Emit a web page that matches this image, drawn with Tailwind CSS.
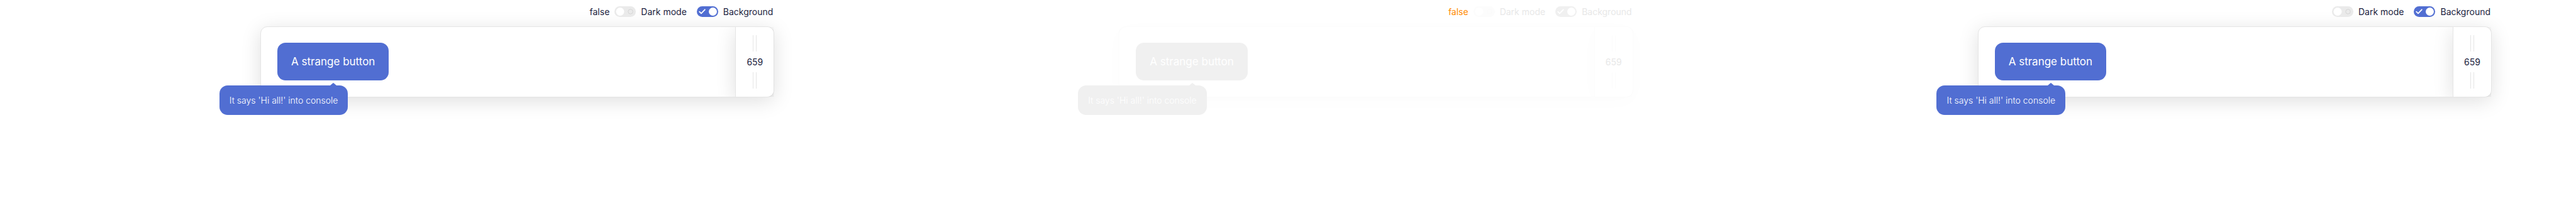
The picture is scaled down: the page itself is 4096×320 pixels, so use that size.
<!DOCTYPE html>
<html lang="en">
<head>
<meta charset="utf-8">
<title>Resizable preview</title>
<script src="https://cdn.jsdelivr.net/npm/@tailwindcss/browser@4"></script>
</head>
<body class="min-h-screen overflow-x-hidden bg-white font-['Inter',sans-serif] text-[14px] leading-[17px] text-[#1b1d3d]">
<main class="grid grid-cols-3">

  <section class="pt-[10px] pr-[134px] pl-[414px]">
    <div class="relative z-10 mb-[15px] flex items-center justify-end gap-4 pr-[2px]">
      <div class="flex items-center gap-2">
        <output>false</output>
        <label class="flex items-center gap-2">
          <span class="relative flex">
            <input type="checkbox" class="h-[17px] w-[34px] appearance-none rounded-full bg-[#eaeaea] checked:bg-[#516ed2]">
            <svg class="absolute inset-0" width="34" height="17" viewBox="0 0 34 17" fill="none"><circle cx="9" cy="8.5" r="6.5" fill="#fff"/><circle cx="25.5" cy="8.5" r="3.7" stroke="#d2d2d2" stroke-width="0.9"/></svg>
          </span>
          Dark mode
        </label>
      </div>
      <label class="flex items-center gap-2">
        <span class="relative flex">
          <input type="checkbox" checked class="h-[17px] w-[34px] appearance-none rounded-full bg-[#eaeaea] checked:bg-[#516ed2]">
          <svg class="absolute inset-0" width="34" height="17" viewBox="0 0 34 17" fill="none"><circle cx="25.5" cy="8.5" r="6.5" fill="#fff"/><path d="M4.2 8.6 L7 11.4 L12.8 5.3" stroke="#fff" stroke-width="1.8" stroke-linecap="round" stroke-linejoin="round"/></svg>
        </span>
        Background
      </label>
    </div>
    <div class="flex rounded-[11px] border border-[#e5e5e5] bg-white shadow-[0_6px_32px_rgba(0,0,0,0.13)]">
      <div class="flex-1 px-[26px] pt-[25px] pb-[26px]">
        <div class="relative z-10 w-fit">
          <button type="button" class="h-[60px] rounded-[13px] bg-[#516ed2] px-[22px] text-[17px] text-white">A strange button</button>
          <div role="tooltip" class="absolute top-[68px] right-[65px] rounded-[13px] bg-[#516ed2] px-4 py-[15px] font-light whitespace-nowrap text-white">It says 'Hi all!' into console
            <svg class="absolute right-[18px] bottom-full" width="10" height="4" viewBox="0 0 10 4"><path d="M0 4 L4.2 0.4 Q5 -0.2 5.8 0.4 L10 4 Z" fill="#516ed2"/></svg>
          </div>
        </div>
      </div>
      <div class="flex w-[61px] flex-col items-center justify-between rounded-r-[10px] border-l border-[#e5e5e5] bg-white py-[13px] shadow-[0_6px_32px_rgba(0,0,0,0.13)] [clip-path:inset(0_0_0_-60px)]">
        <span class="h-[26px] w-[6px] border-x border-[#e5e5e5]"></span>
        <span>659</span>
        <span class="h-[26px] w-[6px] border-x border-[#e5e5e5]"></span>
      </div>
    </div>
  </section>

  <section class="pt-[10px] pr-[134px] pl-[414px] text-[#e8e8e8]">
    <div class="relative z-10 mb-[15px] flex items-center justify-end gap-4 pr-[2px]">
      <div class="flex items-center gap-2">
        <output class="text-[#ff8a00]">false</output>
        <label class="flex items-center gap-2">
          <span class="relative flex">
            <input type="checkbox" class="h-[17px] w-[34px] appearance-none rounded-full bg-[#fcfcfc] checked:bg-[#f0f0f0]">
            <svg class="absolute inset-0" width="34" height="17" viewBox="0 0 34 17" fill="none"><circle cx="9" cy="8.5" r="6.5" fill="#fff"/><circle cx="25.5" cy="8.5" r="3.7" stroke="#f9f9f9" stroke-width="0.9"/></svg>
          </span>
          Dark mode
        </label>
      </div>
      <label class="flex items-center gap-2">
        <span class="relative flex">
          <input type="checkbox" checked class="h-[17px] w-[34px] appearance-none rounded-full bg-[#fcfcfc] checked:bg-[#f0f0f0]">
          <svg class="absolute inset-0" width="34" height="17" viewBox="0 0 34 17" fill="none"><circle cx="25.5" cy="8.5" r="6.5" fill="#fff"/><path d="M4.2 8.6 L7 11.4 L12.8 5.3" stroke="#fff" stroke-width="1.8" stroke-linecap="round" stroke-linejoin="round"/></svg>
        </span>
        Background
      </label>
    </div>
    <div class="flex rounded-[11px] border border-[#fcfcfc] bg-white shadow-[0_6px_32px_rgba(0,0,0,0.015)]">
      <div class="flex-1 px-[26px] pt-[25px] pb-[26px]">
        <div class="relative z-10 w-fit">
          <button type="button" class="h-[60px] rounded-[13px] bg-[#f0f0f0] px-[22px] text-[17px] text-white">A strange button</button>
          <div role="tooltip" class="absolute top-[68px] right-[65px] rounded-[13px] bg-[#f0f0f0] px-4 py-[15px] font-light whitespace-nowrap text-white">It says 'Hi all!' into console
            <svg class="absolute right-[18px] bottom-full" width="10" height="4" viewBox="0 0 10 4"><path d="M0 4 L4.2 0.4 Q5 -0.2 5.8 0.4 L10 4 Z" fill="#f0f0f0"/></svg>
          </div>
        </div>
      </div>
      <div class="flex w-[61px] flex-col items-center justify-between rounded-r-[10px] border-l border-[#fcfcfc] bg-white py-[13px] shadow-[0_6px_32px_rgba(0,0,0,0.015)] [clip-path:inset(0_0_0_-60px)]">
        <span class="h-[26px] w-[6px] border-x border-[#fcfcfc]"></span>
        <span>659</span>
        <span class="h-[26px] w-[6px] border-x border-[#fcfcfc]"></span>
      </div>
    </div>
  </section>

  <section class="pt-[10px] pr-[134px] pl-[414px]">
    <div class="relative z-10 mb-[15px] flex items-center justify-end gap-4 pr-[2px]">
      <label class="flex items-center gap-2">
        <span class="relative flex">
          <input type="checkbox" class="h-[17px] w-[34px] appearance-none rounded-full bg-[#eaeaea] checked:bg-[#516ed2]">
          <svg class="absolute inset-0" width="34" height="17" viewBox="0 0 34 17" fill="none"><circle cx="9" cy="8.5" r="6.5" fill="#fff"/><circle cx="25.5" cy="8.5" r="3.7" stroke="#d2d2d2" stroke-width="0.9"/></svg>
        </span>
        Dark mode
      </label>
      <label class="flex items-center gap-2">
        <span class="relative flex">
          <input type="checkbox" checked class="h-[17px] w-[34px] appearance-none rounded-full bg-[#eaeaea] checked:bg-[#516ed2]">
          <svg class="absolute inset-0" width="34" height="17" viewBox="0 0 34 17" fill="none"><circle cx="25.5" cy="8.5" r="6.5" fill="#fff"/><path d="M4.2 8.6 L7 11.4 L12.8 5.3" stroke="#fff" stroke-width="1.8" stroke-linecap="round" stroke-linejoin="round"/></svg>
        </span>
        Background
      </label>
    </div>
    <div class="flex rounded-[11px] border border-[#e5e5e5] bg-white shadow-[0_6px_32px_rgba(0,0,0,0.13)]">
      <div class="flex-1 px-[26px] pt-[25px] pb-[26px]">
        <div class="relative z-10 w-fit">
          <button type="button" class="h-[60px] rounded-[13px] bg-[#516ed2] px-[22px] text-[17px] text-white">A strange button</button>
          <div role="tooltip" class="absolute top-[68px] right-[65px] rounded-[13px] bg-[#516ed2] px-4 py-[15px] font-light whitespace-nowrap text-white">It says 'Hi all!' into console
            <svg class="absolute right-[18px] bottom-full" width="10" height="4" viewBox="0 0 10 4"><path d="M0 4 L4.2 0.4 Q5 -0.2 5.8 0.4 L10 4 Z" fill="#516ed2"/></svg>
          </div>
        </div>
      </div>
      <div class="flex w-[61px] flex-col items-center justify-between rounded-r-[10px] border-l border-[#e5e5e5] bg-white py-[13px] shadow-[0_6px_32px_rgba(0,0,0,0.13)] [clip-path:inset(0_0_0_-60px)]">
        <span class="h-[26px] w-[6px] border-x border-[#e5e5e5]"></span>
        <span>659</span>
        <span class="h-[26px] w-[6px] border-x border-[#e5e5e5]"></span>
      </div>
    </div>
  </section>

</main>
</body>
</html>
